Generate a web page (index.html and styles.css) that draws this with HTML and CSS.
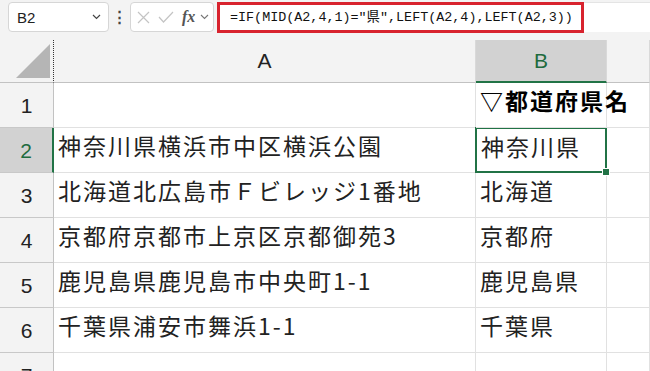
FILE: index.html
```html
<!DOCTYPE html>
<html lang="ja">

<head>
    <meta charset="UTF-8">
    <meta name="viewport" content="width=device-width, initial-scale=1.0">
    <title>Sheet</title>
    <link rel="stylesheet" href="styles.css">
</head>

<body>
    <div class="toolbar">
        <div class="name-box">
            <span class="name-text">B2</span>
            <svg class="chevron" width="9" height="6" viewBox="0 0 9 6"><path d="M1 1 L4.5 4.5 L8 1" fill="none" stroke="#444" stroke-width="1.2"/></svg>
        </div>
        <div class="dots">⋮</div>
        <div class="fx-box">
            <svg width="13" height="13" viewBox="0 0 13 13"><path d="M1 1 L12 12 M12 1 L1 12" stroke="#c4c4c4" stroke-width="1.2"/></svg>
            <svg width="16" height="12" viewBox="0 0 16 12"><path d="M1 6 L5.5 11 L15 1" fill="none" stroke="#c4c4c4" stroke-width="1.2"/></svg>
            <span class="fx">fx</span>
            <svg width="9" height="6" viewBox="0 0 9 6"><path d="M1 1 L4.5 4.5 L8 1" fill="none" stroke="#777" stroke-width="1.1"/></svg>
        </div>
        <div class="formula-bar">
            <div class="formula-mark">=IF(MID(A2,4,1)="県",LEFT(A2,4),LEFT(A2,3))</div>
        </div>
    </div>

    <div class="sheet">
        <!-- header row -->
        <div class="corner"><div class="corner-tri"></div></div>
        <div class="col-head">A</div>
        <div class="col-head active">B</div>
        <div class="col-head"></div>

        <!-- row 1 -->
        <div class="row-head">1</div>
        <div class="cell"></div>
        <div class="cell bold overflow">▽都道府県名</div>
        <div class="cell"></div>

        <!-- row 2 -->
        <div class="row-head active">2</div>
        <div class="cell">神奈川県横浜市中区横浜公園</div>
        <div class="cell selected">神奈川県</div>
        <div class="cell"></div>

        <!-- row 3 -->
        <div class="row-head">3</div>
        <div class="cell">北海道北広島市Ｆビレッジ1番地</div>
        <div class="cell">北海道</div>
        <div class="cell"></div>

        <!-- row 4 -->
        <div class="row-head">4</div>
        <div class="cell">京都府京都市上京区京都御苑3</div>
        <div class="cell">京都府</div>
        <div class="cell"></div>

        <!-- row 5 -->
        <div class="row-head">5</div>
        <div class="cell">鹿児島県鹿児島市中央町1-1</div>
        <div class="cell">鹿児島県</div>
        <div class="cell"></div>

        <!-- row 6 -->
        <div class="row-head">6</div>
        <div class="cell">千葉県浦安市舞浜1-1</div>
        <div class="cell">千葉県</div>
        <div class="cell"></div>

        <!-- row 7 -->
        <div class="row-head">7</div>
        <div class="cell"></div>
        <div class="cell"></div>
        <div class="cell"></div>
    </div>
</body>

</html>
```

FILE: styles.css
```css
body {
    margin: 0;
    background: #f3f3f3;
    font-family: "Liberation Sans", Arial, "Noto Sans CJK JP", sans-serif;
    overflow: hidden;
}

.toolbar {
    display: flex;
    align-items: flex-start;
    height: 40px;
    padding-top: 2px;
    box-sizing: border-box;
}

.name-box {
    display: flex;
    align-items: center;
    justify-content: space-between;
    width: 101px;
    height: 30px;
    margin-left: 8px;
    padding: 0 7px 0 8px;
    box-sizing: border-box;
    background: #fff;
    border: 1px solid #d6d6d6;
    border-radius: 4px;
}

.name-text {
    font-size: 15px;
    color: #222;
}

.dots {
    width: 21px;
    text-align: center;
    font-size: 15px;
    line-height: 30px;
    color: #444;
    font-weight: bold;
}

.fx-box {
    display: flex;
    align-items: center;
    gap: 8px;
    width: 84px;
    height: 30px;
    padding-left: 6px;
    box-sizing: border-box;
    background: #fff;
    border: 1px solid #d6d6d6;
    border-radius: 4px;
}

.fx {
    font-family: "Liberation Serif", serif;
    font-style: italic;
    font-weight: bold;
    font-size: 16px;
    color: #555;
    margin-right: -3px;
}

.formula-bar {
    flex: 1;
    height: 30px;
    margin-left: 3px;
    background: #fff;
    border-top: 1px solid #e4e4e4;
    box-sizing: border-box;
    position: relative;
}

.formula-mark {
    position: absolute;
    left: 0;
    top: -1px;
    width: 367px;
    height: 31px;
    box-sizing: border-box;
    border: 3px solid #d8232e;
    padding-left: 10px;
    font-family: "Liberation Mono", "Noto Sans CJK JP", monospace;
    font-size: 13.4px;
    line-height: 25px;
    color: #111;
    white-space: nowrap;
}

.sheet {
    display: grid;
    grid-template-columns: 54px 422px 131px 1fr;
    grid-template-rows: 43px repeat(7, 45px);
    background: #fff;
}

.corner,
.col-head,
.row-head {
    background: #f3f3f3;
    color: #222;
    font-size: 21px;
    box-sizing: border-box;
}

.corner {
    border-right: 1px dotted #333;
    border-bottom: 1px solid #c2c2c2;
    display: flex;
    justify-content: flex-end;
    align-items: flex-end;
    padding: 0 3px 4px 0;
}

.corner-tri {
    width: 34px;
    height: 34px;
    background: #b5b5b5;
    clip-path: polygon(100% 0, 100% 100%, 0 100%);
}

.col-head {
    display: flex;
    align-items: center;
    justify-content: center;
    border-right: 1px solid #d9d9d9;
    border-bottom: 1px solid #c2c2c2;
}

.col-head.active {
    background: #d2d2d2;
    color: #1e6b3e;
    border-bottom: 2px solid #217346;
}

.row-head {
    display: flex;
    align-items: center;
    justify-content: center;
    padding-top: 2px;
    border-right: 1px solid #c2c2c2;
    border-bottom: 1px solid #c8c8c8;
}

.row-head.active {
    background: #d2d2d2;
    color: #1e6b3e;
    border-right: 2px solid #217346;
}

.cell {
    box-sizing: border-box;
    border-right: 1px solid #e1e1e1;
    border-bottom: 1px solid #e1e1e1;
    padding: 6px 0 0 4px;
    font-family: "Noto Sans CJK JP", sans-serif;
    font-size: 23px;
    line-height: 23px;
    letter-spacing: 2px;
    color: #222;
    white-space: nowrap;
}

.cell.bold {
    font-weight: 700;
    color: #000;
}

.cell.overflow {
    overflow: visible;
    position: relative;
    z-index: 1;
}

.cell.selected {
    position: relative;
    border: 2px solid #217346;
    margin: -1px 0 0 -1px;
    padding: 6px 0 0 4px;
}

.cell.selected::after {
    content: "";
    position: absolute;
    right: -5px;
    bottom: -5px;
    width: 6px;
    height: 6px;
    background: #217346;
    border: 1px solid #fff;
}
```
